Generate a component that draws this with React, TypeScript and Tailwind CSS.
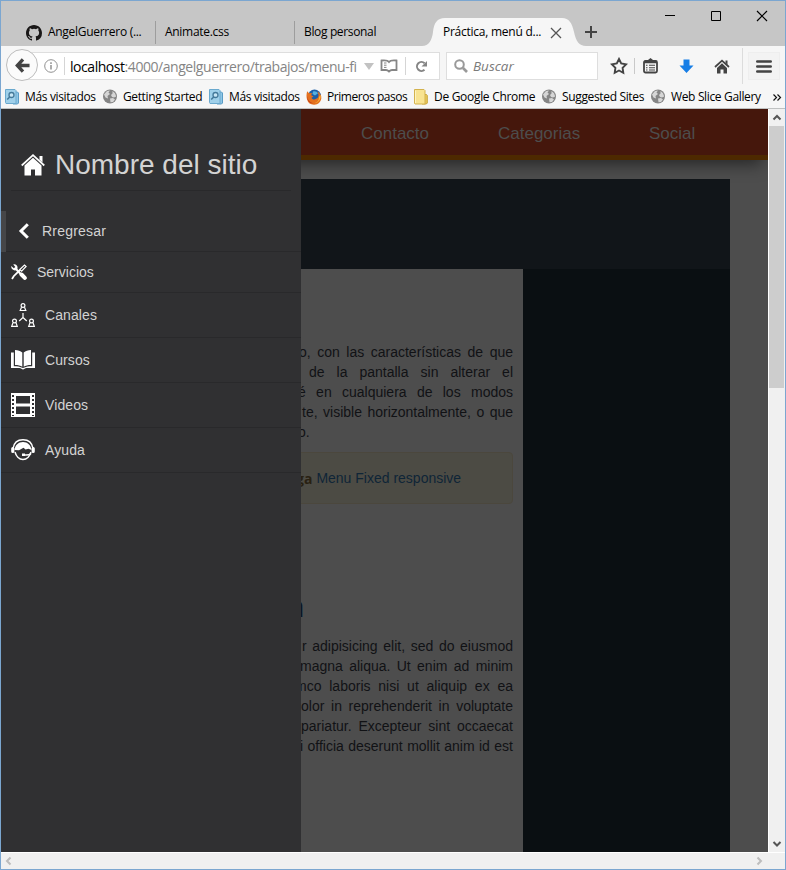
import type { ReactNode } from "react";

const ui = "font-['Open_Sans','Noto_Sans',sans-serif]";
const arial = "font-['Liberation_Sans',Arial,sans-serif]";

/* ---------- browser chrome icons ---------- */

function GithubMark() {
  return (
    <svg width="16" height="16" viewBox="0 0 16 16" fill="#191717">
      <path d="M8 0C3.58 0 0 3.58 0 8c0 3.54 2.29 6.53 5.47 7.59.4.07.55-.17.55-.38 0-.19-.01-.82-.01-1.49-2.01.37-2.53-.49-2.69-.94-.09-.23-.48-.94-.82-1.13-.28-.15-.68-.52-.01-.53.63-.01 1.08.58 1.23.82.72 1.21 1.87.87 2.33.66.07-.52.28-.87.51-1.07-1.78-.2-3.64-.89-3.64-3.95 0-.87.31-1.59.82-2.15-.08-.2-.36-1.02.08-2.12 0 0 .67-.21 2.2.82a7.6 7.6 0 0 1 4 0c1.53-1.04 2.2-.82 2.2-.82.44 1.1.16 1.92.08 2.12.51.56.82 1.27.82 2.15 0 3.07-1.87 3.75-3.65 3.95.29.25.54.73.54 1.48 0 1.07-.01 1.93-.01 2.2 0 .21.15.46.55.38A8.01 8.01 0 0 0 16 8c0-4.42-3.58-8-8-8z" />
    </svg>
  );
}

function SearchFolder() {
  return (
    <svg width="16" height="16" viewBox="0 0 16 16">
      <path d="M10 3h3.500l1 1v10l-1 1H9z" fill="#8fc6e6" stroke="#5a9cc5" />
      <path d="M1.500 .5h9.500l1 1v13H2l-.5-1z" fill="#9fd0ea" stroke="#6aa9ce" />
      <circle cx="7.500" cy="6" r="2.500" fill="#c8e6f5" stroke="#44799a" strokeWidth="1.300" />
      <path d="M5.700 8 3.200 10.500" stroke="#44799a" strokeWidth="1.600" />
    </svg>
  );
}

function Globe() {
  return (
    <svg width="16" height="16" viewBox="0 0 16 16">
      <circle cx="8" cy="7.500" r="7" fill="#858585" />
      <path d="M2 5.500 5 2 8 1.500 6.500 3.500 8 5 5.500 7 6 9.500 3.500 8.500zM10.500 2l2.500 2.200 1.200 3.300-2.200 1-2-.5-1-2 1.500-1.500zM8 9.500l3-.5 2 1.500-2 2.500-2.500.3z" fill="#d6d6d6" />
    </svg>
  );
}

function Firefox() {
  return (
    <svg width="16" height="16" viewBox="0 0 16 16">
      <circle cx="8.500" cy="7" r="6.500" fill="#1c5fa8" />
      <path d="M7 2.500c2-.8 4 .1 5 1.800L9 6.500 6.500 5z" fill="#57b0df" />
      <path d="M1.300 2.200 3 4.200 6 4l-.8 2.300 2.300 1.200-2 1.200c.7 2 3.200 2.300 4.500 1 2-.3 2.700-2 2.500-4.200l-1-3c2.500 1.500 4.300 4 3.800 7.300A7.400 7.400 0 0 1 1 10.500C.2 7.500.4 4.500 1.300 2.200z" fill="#e4701e" />
      <path d="M14.500 6c.8 4-2 8-6 8.300 3-1 4.800-3.300 4.500-6.300z" fill="#f6b73c" />
      <path d="M1 7c.5 4 3 6.500 6.500 7.500C3.500 14.500 1 11.500 1 7z" fill="#b9331d" />
    </svg>
  );
}

function YellowFolder() {
  return (
    <svg width="16" height="16" viewBox="0 0 16 16">
      <path d="M9 5.500h4.500l.8 1V14l-1 1H9z" fill="#e9c95c" stroke="#c9a53b" />
      <path d="M1.500 .5h9.500l1 1v13.500h-10l-.5-.5z" fill="#f8e390" stroke="#d3b24d" />
      <path d="M2.500 1.500v12.500" stroke="#fdf3c0" />
    </svg>
  );
}

function Chevron({ dir, color }: { dir: "up" | "down" | "left" | "right"; color: string }) {
  const paths = {
    up: "M1.500 6.500 5 3l3.500 3.500",
    down: "M1.500 3 5 6.500 8.500 3",
    left: "M6.500 1.500 3 5l3.500 3.500",
    right: "M3.500 1.500 7 5 3.500 8.500",
  };
  return (
    <svg width="10" height="10" viewBox="0 0 10 10" fill="none" stroke={color} strokeWidth="2">
      <path d={paths[dir]} />
    </svg>
  );
}

/* ---------- browser chrome ---------- */

function TabStrip() {
  return (
    <div className={`flex h-[45px] shrink-0 bg-[#c6c6c6] text-[12px] text-black ${ui}`}>
      <div className="mt-[20px] flex h-[23px] w-[155px] items-center border-r border-[#9d9d9d] pl-[25px]">
        <GithubMark />
        <span className="-mt-[2px] ml-[6px] whitespace-nowrap tracking-[-0.3px]">AngelGuerrero (...</span>
      </div>
      <div className="mt-[20px] flex h-[23px] w-[139px] items-center border-r border-[#9d9d9d] pl-[9px]">
        <span className="-mt-[2px] whitespace-nowrap tracking-[-0.3px]">Animate.css</span>
      </div>
      <div className="mt-[20px] flex h-[23px] w-[127px] items-center pl-[9px]">
        <span className="-mt-[2px] whitespace-nowrap tracking-[-0.35px]">Blog personal</span>
      </div>
      <div className="relative h-[45px] w-[163px]">
        <svg className="absolute left-0 top-[17px]" width="164" height="28" viewBox="0 0 164 28">
          <path d="M0 28C7 28 10 22 11 14 12 5 15 0 23 0H140C147 0 150 5 152 14 154 23 157 28 164 28z" fill="#f6f6f6" />
        </svg>
        <div className="relative mt-[20px] flex h-[23px] items-center pl-[21px]">
          <span className="-mt-[2px] w-[107px] whitespace-nowrap tracking-[-0.25px]">Práctica, menú d...</span>
          <svg width="12" height="12" viewBox="0 0 12 12" stroke="#555" strokeWidth="1.300">
            <path d="m1 1 10 10M11 1 1 11" />
          </svg>
        </div>
      </div>
      <svg className="mt-[25px]" width="12" height="12" viewBox="0 0 12 12" stroke="#444" strokeWidth="2">
        <path d="M6 0v12M0 6h12" />
      </svg>
      <svg className="ml-[68px] mt-[9px]" width="104" height="12" viewBox="0 0 104 12" fill="none" stroke="#000">
        <path d="M0 5.500h10" />
        <path d="M46.500 1.500h9v9h-9z" />
        <path d="m92 1 10 10M102 1 92 11" strokeWidth="1.200" />
      </svg>
    </div>
  );
}

function Toolbar() {
  return (
    <div className={`flex h-[40px] shrink-0 items-center bg-[#f6f6f6] ${ui}`}>
      <div className="z-10 -mt-[2px] ml-[5px] flex h-[32px] w-[32px] shrink-0 items-center justify-center rounded-full border border-[#bdbdbd] bg-[#fbfbfb]">
        <svg width="15" height="15" viewBox="0 0 16 16" fill="none" stroke="#444" strokeWidth="3.600">
          <path d="M8.500 1.500 2.500 8l6 6.500M3 8h12.500" />
        </svg>
      </div>
      <div className="-ml-[15px] flex h-[28px] w-[417px] shrink-0 items-center border border-[#dedede] bg-white">
        <svg className="ml-[20px]" width="14" height="14" viewBox="0 0 14 14" fill="none" stroke="#919191">
          <circle cx="7" cy="7" r="6.300" />
          <path d="M7 6v4.500M7 3.300v1.600" strokeWidth="1.500" />
        </svg>
        <div className="ml-[6px] h-[18px] w-px bg-[#d5d5d5]" />
        <div className="ml-[5px] w-[294px] whitespace-nowrap text-[14px] tracking-[-0.45px] text-[#858585]">
          <span className="text-black">localhost</span>:4000/angelguerrero/trabajos/menu-fi
        </div>
        <svg width="10" height="8" viewBox="0 0 10 8" fill="#c2c2c2"><path d="M0 1h10L5 8z" /></svg>
        <svg className="ml-[6px]" width="18" height="14" viewBox="0 0 18 14" fill="none" stroke="#858585" strokeWidth="1.800">
          <path d="M9 3C8 1.500 6 1 1.500 1.500v9.500H6c1.500 0 2 .5 3 1.500 1-1 1.500-1.500 3-1.500h4.500V1.500C12 1 10 1.500 9 3z" />
          <path d="M4 4h2.500M4 6.200h2.500M4 8.400h2.500" strokeWidth="1" />
        </svg>
        <div className="ml-[7px] h-[18px] w-px bg-[#d5d5d5]" />
        <svg className="ml-[9px]" width="13" height="13" viewBox="0 0 13 13">
          <path d="M9.500 9.800A4.500 4.500 0 1 1 9.600 3.200" fill="none" stroke="#858585" strokeWidth="2" />
          <path d="M12 1v5.500H6.500z" fill="#858585" />
        </svg>
      </div>
      <div className="ml-[6px] flex h-[28px] w-[152px] shrink-0 items-center border border-[#dedede] bg-white">
        <svg className="ml-[7px]" width="14" height="14" viewBox="0 0 14 14" fill="none" stroke="#999">
          <circle cx="5.500" cy="5.500" r="4.300" strokeWidth="2" />
          <path d="m9 9 4 4" strokeWidth="2.600" />
        </svg>
        <span className="ml-[5px] text-[13.5px] italic text-[#7b7b7b]">Buscar</span>
      </div>
      <svg className="ml-[12px]" width="18" height="18" viewBox="0 0 18 18" fill="none" stroke="#444" strokeWidth="1.900">
        <path d="m9 2 2.200 4.500 4.900.8-3.500 3.500.7 5L9 13.500l-4.300 2.300.7-5-3.500-3.500 4.900-.8z" />
      </svg>
      <div className="ml-[6px] h-[16px] w-px bg-[#c9c9c9]" />
      <svg className="ml-[8px]" width="15" height="16" viewBox="0 0 15 16">
        <path d="M5 3.500V2l2.500-2L10 2v1.500" fill="#444" />
        <rect x="1" y="3" width="13" height="11.500" rx="1.500" fill="none" stroke="#444" strokeWidth="1.800" />
        <path d="M1 4h13" stroke="#444" strokeWidth="2.500" />
        <path d="M3 7.300h1.500M6 7.300h6M3 9.700h1.500M6 9.700h6M3 12h1.500M6 12h6" stroke="#444" strokeWidth="1.100" />
      </svg>
      <svg className="ml-[21px]" width="15" height="15" viewBox="0 0 15 15" fill="#177ee6">
        <path d="M4.500 0.500h6v6h4L7.500 14 .5 6.500h4z" />
      </svg>
      <svg className="ml-[20px]" width="16" height="15" viewBox="0 0 16 15" fill="#444">
        <path d="M1 8 8 1.700 15 8" fill="none" stroke="#444" strokeWidth="1.800" />
        <path d="M8 4.300 13 9v5.500H9.500v-4h-3v4H3V9z" />
        <path d="M11.500 1.500h2V6l-2-2z" />
      </svg>
      <div className="ml-[12px] h-[36px] w-px bg-[#dcdcdc]" />
      <div className="ml-[5px] flex h-[28px] w-[32px] items-center justify-center border border-[#eeeeee] bg-[#f3f3f3]">
        <svg width="16" height="13" viewBox="0 0 16 13" stroke="#444" strokeWidth="2.600" strokeLinecap="round">
          <path d="M1.300 1.500h13.400M1.300 6.500h13.400M1.300 11.500h13.400" />
        </svg>
      </div>
    </div>
  );
}

function Bookmark({ icon, label, className }: { icon: ReactNode; label: string; className: string }) {
  return (
    <div className={`flex shrink-0 items-center ${className}`}>
      {icon}
      <span className="ml-[5px] whitespace-nowrap">{label}</span>
    </div>
  );
}

function BookmarksBar() {
  return (
    <div className={`flex h-[23px] shrink-0 border-b border-[#bfc1c1] bg-[#f6f6f6] pl-[3px] text-[12px] text-black ${ui}`}>
      <Bookmark icon={<SearchFolder />} label="Más visitados" className="w-[98px] tracking-[-0.35px]" />
      <Bookmark icon={<Globe />} label="Getting Started" className="w-[106px] tracking-[-0.38px]" />
      <Bookmark icon={<SearchFolder />} label="Más visitados" className="w-[98px] tracking-[-0.35px]" />
      <Bookmark icon={<Firefox />} label="Primeros pasos" className="w-[107px] tracking-[-0.45px]" />
      <Bookmark icon={<YellowFolder />} label="De Google Chrome" className="w-[128px] tracking-[-0.3px]" />
      <Bookmark icon={<Globe />} label="Suggested Sites" className="w-[109px] tracking-[-0.35px]" />
      <Bookmark icon={<Globe />} label="Web Slice Gallery" className="w-[123px] tracking-[-0.35px]" />
      <svg className="mt-[8px]" width="9" height="7" viewBox="0 0 9 7" fill="none" stroke="#111" strokeWidth="1.200">
        <path d="m.5.5 3 3-3 3M4.500.5l3 3-3 3" />
      </svg>
    </div>
  );
}

/* ---------- side menu ---------- */

function HomeIcon() {
  return (
    <svg width="24" height="24" viewBox="0 0 24 24" fill="#fff">
      <path d="M.7 12.500 12 2.200 23.300 12.500" fill="none" stroke="#fff" strokeWidth="1.700" />
      <path d="M12 4.800 20.500 12.500v10H14v-6h-4v6H3.500v-10z" />
      <path d="M18.500 3h3v6.500L18.500 6.800z" />
    </svg>
  );
}

function ToolsIcon() {
  return (
    <svg width="16" height="16" viewBox="0 0 16 16" fill="none" stroke="#fff">
      <path d="m5 5 8 8.500" strokeWidth="2" />
      <path d="M.3 2 2.800 4.200 4.300 3 2.300.5C5-.2 7.300 2 6.300 5L5 6.300C2.500 7-.3 5 .3 2z" fill="#fff" stroke="none" />
      <path d="m10.500 10.500 3.300 3.400" strokeWidth="4" strokeLinecap="round" />
      <path d="M1 15 2.700 12.200 9 6" strokeWidth="1.800" />
      <path d="m8.800 5.500 4.700-4.500 1.600 1.500-4.500 4.700z" strokeWidth="1.200" />
    </svg>
  );
}

function NetworkIcon() {
  return (
    <svg width="24" height="24" viewBox="0 0 24 24" fill="none" stroke="#fff" strokeWidth="1.200">
      <circle cx="12" cy="2.500" r="1.900" />
      <path d="M10.500 4.200 9.200 7.500h5.600l-1.300-3.300" />
      <circle cx="3.500" cy="18" r="1.900" />
      <path d="M2 19.700.7 23.300h5.600L5 19.700" />
      <circle cx="20.500" cy="18" r="1.900" />
      <path d="M19 19.700l-1.300 3.600h5.600L22 19.700" />
      <path d="M12 10v4.500l-3.800 3.500M12 14.500l3.800 3.500" />
    </svg>
  );
}

function BookIcon() {
  return (
    <svg width="24" height="24" viewBox="0 0 24 24" fill="#fff">
      <path d="M4 2c3 .1 5.500.8 7.300 2.500v14.200C9.500 17.500 7 17 4 17zM20 2c-3 .1-5.500.8-7.300 2.500v14.200C14.500 17.500 17 17 20 17z" />
      <path d="M0 4.500h2.800v13.700c3.500 0 6.200.4 9.200 1.700 3-1.300 5.700-1.700 9.200-1.700V4.500H24V20h-8.500c-1.500 0-2.500 1.500-3.500 1.500S10 20 8.500 20H0z" />
    </svg>
  );
}

function FilmIcon() {
  return (
    <svg width="24" height="24" viewBox="0 0 24 24">
      <path d="M0 0h24v24H0z" fill="#fff" />
      <path d="M5 3h14v7.500H5zM5 13.500h14V21H5z" fill="#303032" />
      <path d="M1 2h2v2H1zM1 6h2v2H1zM1 10h2v2H1zM1 14h2v2H1zM1 18h2v2H1zM1 22h2v1H1zM21 2h2v2h-2zM21 6h2v2h-2zM21 10h2v2h-2zM21 14h2v2h-2zM21 18h2v2h-2zM21 22h2v1h-2z" fill="#303032" />
    </svg>
  );
}

function SupportIcon() {
  return (
    <svg width="24" height="24" viewBox="0 0 24 24" fill="none" stroke="#fff">
      <path d="M2 10.500C3 4.500 7 1.800 12 1.800S21 4.500 22 10.500" strokeWidth="1.500" />
      <path d="M3.500 12C4 7 7.500 4 12 4s8 3 8.500 8l-3-1.200-3 .7-2-1.700-4.500 2.500z" fill="#fff" stroke="none" />
      <path d="M1.800 10.500v3M22.200 10.500v3" strokeWidth="3.200" strokeLinecap="round" />
      <path d="M4 14c1 3.700 4 7.500 8 7.500s7-3.800 8-7.500" strokeWidth="1.500" />
      <path d="M20 15.500c-1 1.300-2.500 1.600-5 1.600h-2.500" strokeWidth="1.500" />
      <path d="M11 15.500h3V18h-3z" fill="#fff" stroke="none" />
    </svg>
  );
}

const sections = [
  { label: "Canales", icon: <NetworkIcon /> },
  { label: "Cursos", icon: <BookIcon /> },
  { label: "Videos", icon: <FilmIcon /> },
  { label: "Ayuda", icon: <SupportIcon /> },
];

function SideMenu() {
  return (
    <aside className="flex w-[300px] shrink-0 flex-col bg-[#303032] text-[14px] text-[#d3d3d3]">
      <div className="mx-[10px] mt-[30px] flex h-[52px] items-center border-b border-[#29292b] pl-[10px]">
        <HomeIcon />
        <span className="ml-[10px] text-[28px] leading-none">Nombre del sitio</span>
      </div>
      <nav className="mt-[20px]">
        <div className="flex h-[41px] items-center border-b border-[#29292b]">
          <div className="h-[41px] w-[5px] bg-[#464648]" />
          <svg className="ml-[12px]" width="12" height="16" viewBox="0 0 12 16" fill="none" stroke="#fff" strokeWidth="3">
            <path d="M9.800 1.200 3 8l6.800 6.800" />
          </svg>
          <span className="ml-[12px] tracking-[0.2px]">Rregresar</span>
        </div>
        <div className="flex h-[41px] items-center border-b border-[#29292b] pl-[10px]">
          <ToolsIcon />
          <span className="ml-[10px]">Servicios</span>
        </div>
        {sections.map((s) => (
          <div key={s.label} className="flex h-[45px] items-center border-b border-[#29292b] pl-[10px]">
            {s.icon}
            <span className="ml-[10px] tracking-[0.1px]">{s.label}</span>
          </div>
        ))}
      </nav>
    </aside>
  );
}

/* ---------- dimmed page ---------- */

function Line({ text, className }: { text: string; className: string }) {
  return <div className={`h-[20px] whitespace-nowrap leading-[20px] [text-align-last:justify] ${className}`}>{text}</div>;
}

function Article() {
  return (
    <article className="w-[222px] overflow-hidden bg-[#4d4d4d] pr-[10px] pt-[73px] text-[14px] text-[#111215]">
      <Line text="o, con las características de que" className="-ml-[2px]" />
      <Line text="de la pantalla sin alterar el" className="ml-[8px]" />
      <Line text="é en cualquiera de los modos" className="-ml-[3px]" />
      <Line text="te, visible horizontalmente, o que" className="ml-px" />
      <div className="-ml-[3px] h-[20px] leading-[20px]">o.</div>
      <div className="-ml-[20px] mt-[10px] flex h-[52px] items-center rounded border border-[#4b473d] bg-[#4c4b44] pl-[14px]">
        <b className={`text-[#292112] ${ui}`}>ga</b>
        <span className="ml-[4px] text-[#0f2537]">Menu Fixed responsive</span>
      </div>
      <h2 className={`-ml-[13px] mt-[84px] h-[48px] text-[30px] leading-[36px] text-[#0c1624] ${ui}`}>a</h2>
      <Line text="r adipisicing elit, sed do eiusmod" className="ml-px" />
      <Line text="magna aliqua. Ut enim ad minim" className="-ml-px" />
      <Line text="mco laboris nisi ut aliquip ex ea" className="-ml-[6px]" />
      <Line text="olor in reprehenderit in voluptate" className="" />
      <Line text="pariatur. Excepteur sint occaecat" className="" />
      <Line text="i officia deserunt mollit anim id est" className="-ml-px" />
    </article>
  );
}

function Page() {
  return (
    <main className="flex min-w-0 flex-1 flex-col overflow-hidden bg-[#4d4d4d]">
      <header className="-ml-[30px] flex h-[51px] shrink-0 items-center border-b-[5px] border-[#4d2900] bg-[#45170c] pl-[90px] pt-[3px] text-[17px] text-[#4d4d4d] shadow-[0_10px_16px_-6px_rgba(0,0,0,0.5)]">
        <span className="w-[137px]">Contacto</span>
        <span className="w-[151px]">Categorias</span>
        <span>Social</span>
      </header>
      <div className="mt-[19px] h-[90px] w-[429px] shrink-0 bg-[#111519]" />
      <div className="flex w-[429px] flex-1">
        <Article />
        <div className="flex-1 bg-[#0a0f12]" />
      </div>
    </main>
  );
}

export default function App() {
  return (
    <div className="flex h-[870px] w-[786px] flex-col overflow-hidden border border-[#7ba6d0]">
      <TabStrip />
      <Toolbar />
      <BookmarksBar />
      <div className={`flex h-[743px] shrink-0 ${arial}`}>
        <SideMenu />
        <Page />
        <div className="flex w-[17px] shrink-0 flex-col items-center border-l border-white bg-[#f0f0f0]">
          <div className="flex h-[17px] shrink-0 items-center"><Chevron dir="up" color="#555" /></div>
          <div className="h-[262px] w-[15px] shrink-0 self-start bg-[#cdcdcd]" />
          <div className="mb-[3px] mt-auto"><Chevron dir="down" color="#555" /></div>
        </div>
      </div>
      <div className="flex flex-1 items-center justify-between border-t border-white bg-[#f0f0f0] pl-[3px] pr-[21px]">
        <Chevron dir="left" color="#bdbdbd" />
        <Chevron dir="right" color="#bdbdbd" />
      </div>
    </div>
  );
}
